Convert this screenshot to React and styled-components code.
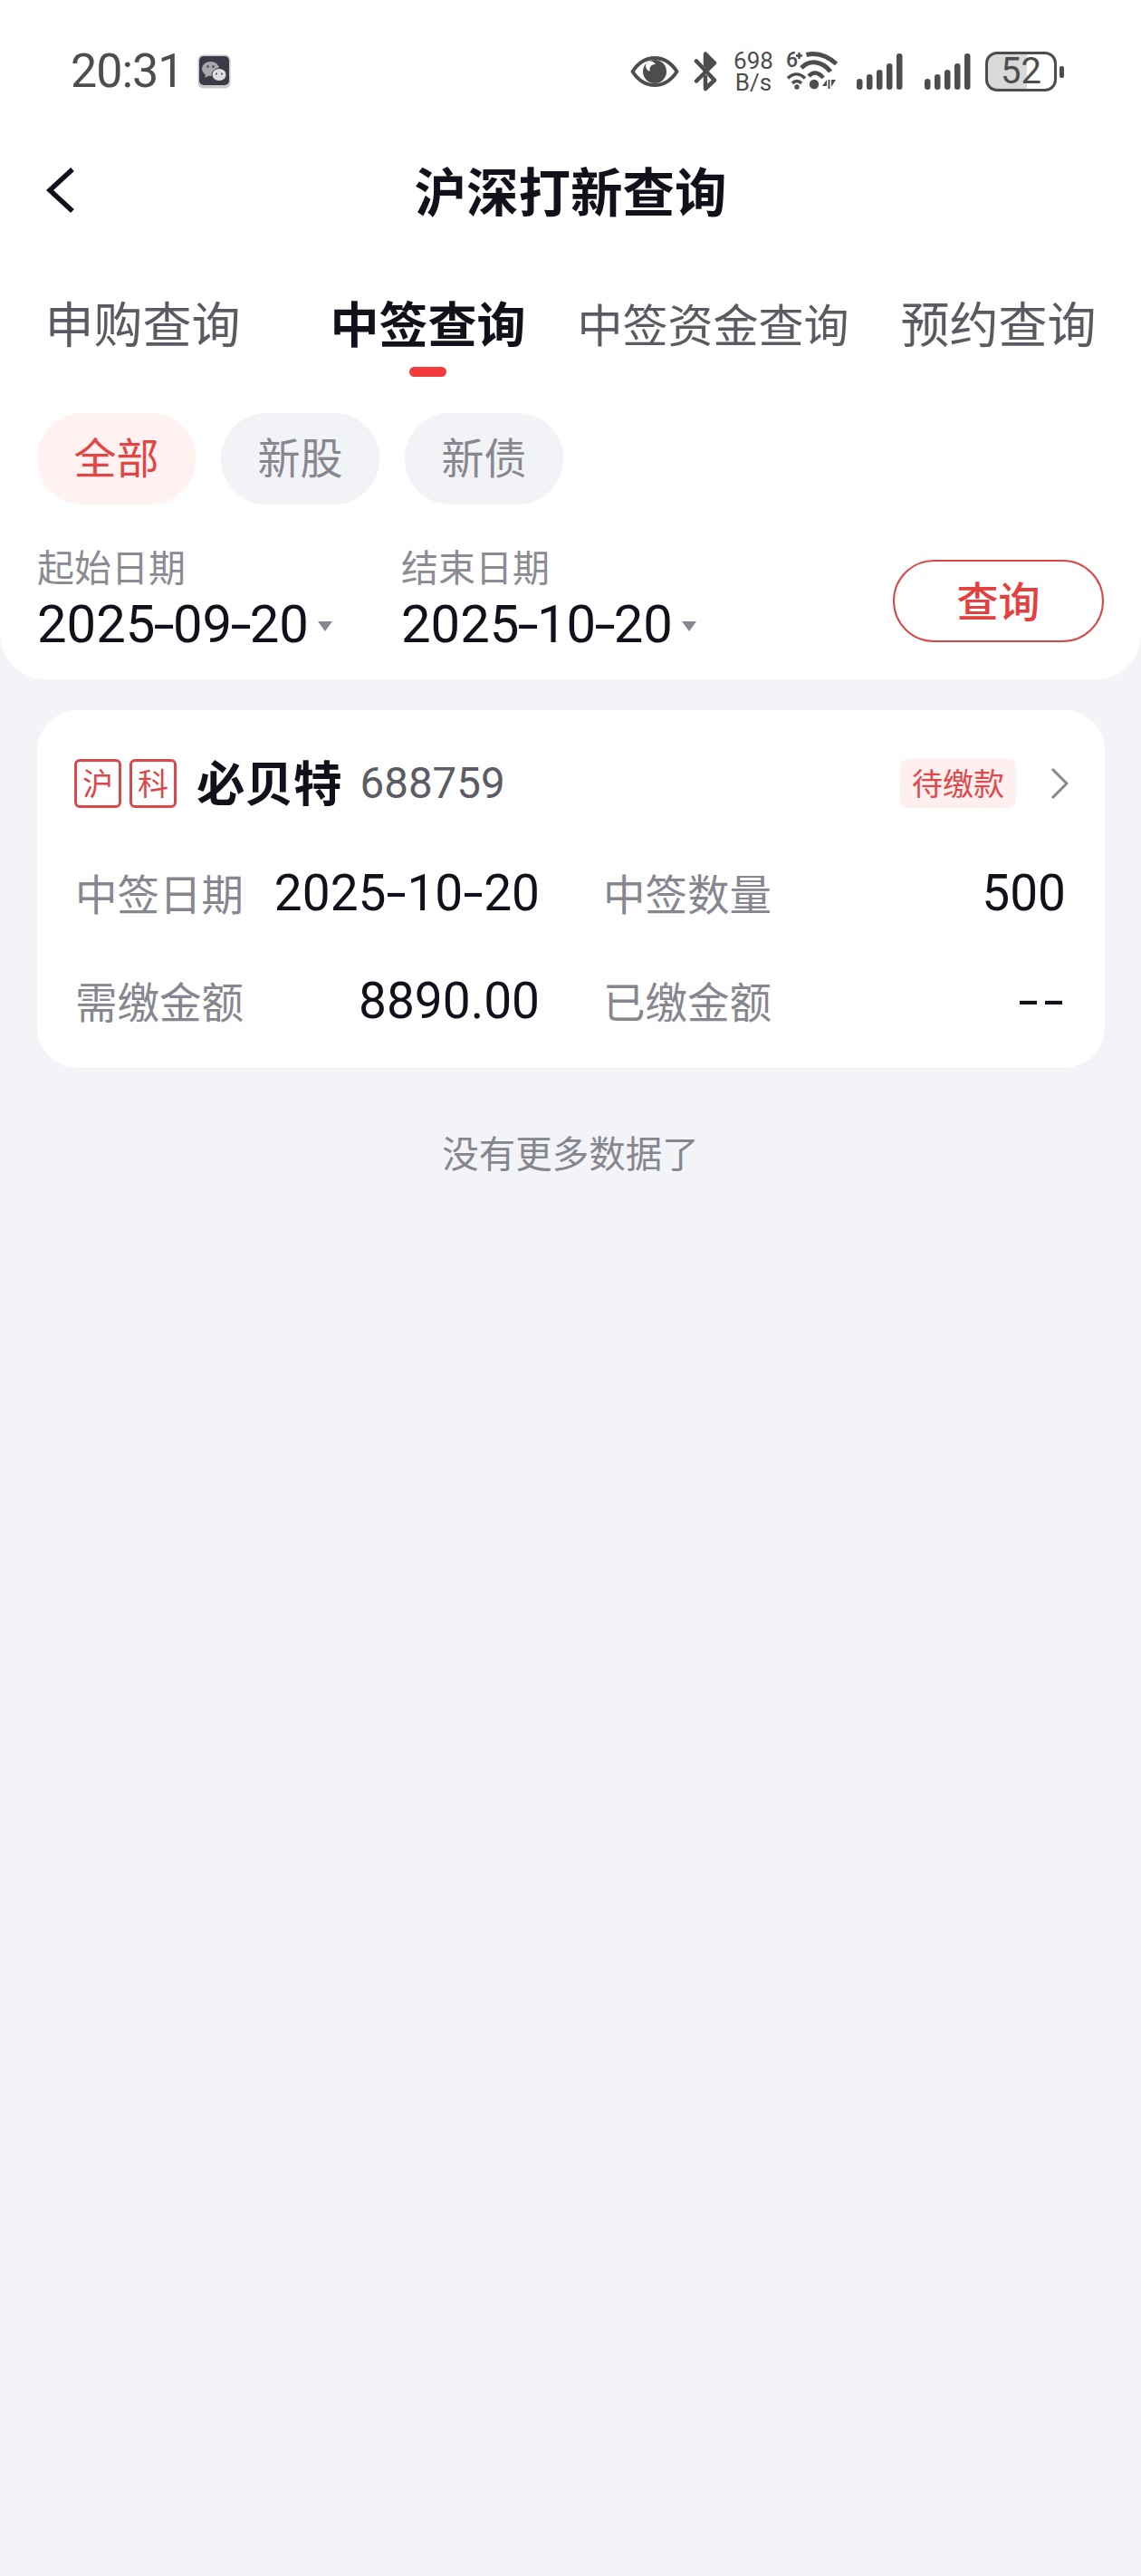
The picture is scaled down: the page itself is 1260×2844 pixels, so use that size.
import React from "react";
import styled, { createGlobalStyle } from "styled-components";

const Global = createGlobalStyle`
  html, body { margin: 0; padding: 0; background: #f3f4f8; }
  body { font-family: Roboto, "Noto Sans CJK SC", sans-serif; }
  * { box-sizing: border-box; }
`;

const Page = styled.div`
  width: 1260px;
  min-height: 2844px;
  background: #f3f4f8;
  overflow: hidden;
`;
const Panel = styled.div`
  background: #fff;
  border-radius: 0 0 50px 50px;
  height: 750px;
`;
const StatusBar = styled.div`
  height: 160px;
  padding: 56px 84px 0 78px;
  display: flex;
  justify-content: space-between;
  align-items: flex-start;
`;
const StatusLeft = styled.div`
  display: flex;
  align-items: center;
  gap: 15px;
  height: 46px;
`;
const Clock = styled.span`
  font: 400 52px/46px Roboto, sans-serif;
  letter-spacing: -1px;
  color: #4d4d4d;
`;
const StatusRight = styled.div`
  display: flex;
  align-items: center;
  height: 46px;
`;
const StatusIcon = styled.svg`
  display: block;
  flex: none;
  margin-left: ${(p) => p.$gap || 0}px;
`;
const Speed = styled.div`
  margin-left: 16px;
  width: 48px;
  font: 400 26px/24.5px Roboto, sans-serif;
  color: #4d4d4d;
  text-align: center;
`;
const Battery = styled.div`
  position: relative;
  margin-left: 16px;
  margin-right: 9px;
  width: 79px;
  height: 44px;
  border: 3.5px solid #4d4d4d;
  border-radius: 13px;
  background: linear-gradient(90deg, #d9d9d9 59%, #fff 59%);
  font: 400 40px/37px Roboto, sans-serif;
  color: #4d4d4d;
  text-align: center;
  &::after {
    content: "";
    position: absolute;
    right: -11px;
    top: 13px;
    width: 5px;
    height: 13px;
    border-radius: 2px;
    background: #4d4d4d;
  }
`;
const Nav = styled.div`
  height: 127px;
  position: relative;
  display: flex;
  justify-content: center;
  padding-top: 9px;
`;
const Back = styled.svg`
  position: absolute;
  left: 48px;
  top: 24px;
`;
const Title = styled.h1`
  margin: 0;
  font: 700 57.5px/80px "Noto Sans CJK SC", sans-serif;
  color: #10111a;
`;
const Tabs = styled.div`
  display: grid;
  grid-template-columns: repeat(4, 1fr);
  padding-top: 37px;
  height: 169px;
  border-top: 1px solid #fbfbfb;
`;
const Tab = styled.div`
  display: flex;
  flex-direction: column;
  align-items: center;
`;
const TabLabel = styled.span`
  font: ${(p) => (p.$active ? 700 : 400)} ${(p) => p.$size || 54}px/62px "Noto Sans CJK SC", sans-serif;
  color: ${(p) => (p.$active ? "#10111a" : "#595a62")};
  white-space: nowrap;
`;
const TabMark = styled.i`
  display: block;
  width: 41px;
  height: 11px;
  margin-top: 18px;
  border-radius: 6px;
  background: #f43b3b;
`;
const Pills = styled.div`
  display: flex;
  gap: 28px;
  padding-left: 41px;
`;
const Pill = styled.div`
  width: 175px;
  height: 101px;
  padding-bottom: 8px;
  border-radius: 50px;
  display: flex;
  align-items: center;
  justify-content: center;
  font: 400 47px/1 "Noto Sans CJK SC", sans-serif;
  background: ${(p) => (p.$active ? "#fff2f1" : "#f2f3f7")};
  color: ${(p) => (p.$active ? "#e34545" : "#86878f")};
`;
const DateRow = styled.div`
  display: flex;
  align-items: flex-start;
  padding: 45px 41px 0 41px;
`;
const DateField = styled.div`
  width: 402px;
`;
const DateLabel = styled.div`
  font: 400 41px/44px "Noto Sans CJK SC", sans-serif;
  color: #8b8c93;
`;
const DateValue = styled.div`
  display: flex;
  align-items: center;
  margin-top: 10px;
  font: 400 58px/66px Roboto, sans-serif;
  color: #10111a;
`;
const Caret = styled.i`
  display: block;
  margin-left: 10px;
  margin-top: 4px;
  border-style: solid;
  border-width: 11px 8px 0 8px;
  border-color: #85868e transparent transparent;
`;
const Dash = styled.span`
  display: inline-block;
  transform: scaleX(1.45);
  margin: 0 ${(p) => p.$pad}em;
`;
const QueryButton = styled.button`
  margin: 16px 0 0 auto;
  width: 233px;
  height: 91px;
  padding: 0 0 6px;
  border: 2px solid #d64a4a;
  border-radius: 46px;
  background: #fff;
  color: #e34040;
  font: 500 46px/1 "Noto Sans CJK SC", sans-serif;
`;
const Card = styled.section`
  margin: 34px 40px 0 41px;
  height: 395px;
  background: #fff;
  border-radius: 45px;
  padding: 54px 40px 0 41px;
`;
const CardHead = styled.div`
  display: flex;
  align-items: center;
  height: 54px;
`;
const Market = styled.span`
  width: 52px;
  height: 54px;
  margin-right: 9px;
  padding-bottom: 2px;
  border: 3.5px solid #d9484a;
  border-radius: 6px;
  display: flex;
  align-items: center;
  justify-content: center;
  font: 400 34px/1 "Noto Sans CJK SC", sans-serif;
  color: #d9484a;
`;
const StockName = styled.span`
  margin-left: 13px;
  padding-bottom: 7px;
  font: 700 53.5px/54px "Noto Sans CJK SC", sans-serif;
  color: #10111a;
`;
const StockCode = styled.span`
  margin-left: 20px;
  font: 400 47.5px/54px Roboto, sans-serif;
  color: #5b5c64;
`;
const Status = styled.span`
  margin-left: auto;
  width: 128px;
  height: 54px;
  padding-bottom: 3px;
  border-radius: 8px;
  background: #fff0ef;
  display: flex;
  align-items: center;
  justify-content: center;
  font: 400 34px/1 "Noto Sans CJK SC", sans-serif;
  color: #e0494b;
`;
const Chevron = styled.svg`
  display: block;
  margin-left: 38px;
`;
const Grid = styled.div`
  display: grid;
  grid-template-columns: 513px 511px;
  column-gap: 70px;
  row-gap: 59px;
  margin-top: 64px;
  margin-left: 1px;
`;
const Cell = styled.div`
  display: flex;
  align-items: center;
  justify-content: space-between;
  height: 60px;
`;
const CellLabel = styled.span`
  padding-bottom: 3px;
  font: 400 46.5px/60px "Noto Sans CJK SC", sans-serif;
  color: #85868e;
`;
const CellValue = styled.span`
  font: 400 55px/60px Roboto, sans-serif;
  color: #10111a;
  white-space: nowrap;
`;
const NoMore = styled.div`
  margin-top: 67px;
  text-align: center;
  font: 400 40.5px/52px "Noto Sans CJK SC", sans-serif;
  color: #85868e;
`;

const WeChat = () => (
  <svg width="37" height="38" viewBox="0 0 37 38">
    <rect x="0.5" y="0.5" width="36" height="37" rx="6" fill="#c9c9cc" />
    <rect x="2" y="2" width="33" height="32" rx="5" fill="#3b3b47" />
    <ellipse cx="14.500" cy="16" rx="9.500" ry="8" fill="#a9a9ad" />
    <path d="M9 22l-1 4 5-2.500z" fill="#a9a9ad" />
    <ellipse cx="24" cy="22.500" rx="8" ry="7" fill="#dedee0" stroke="#3b3b47" strokeWidth="1" />
    <circle cx="11.500" cy="13.500" r="1.200" fill="#3b3b47" />
    <circle cx="17.500" cy="13.500" r="1.200" fill="#3b3b47" />
    <circle cx="21" cy="21.500" r="1" fill="#3b3b47" />
    <circle cx="27" cy="21.500" r="1" fill="#3b3b47" />
  </svg>
);

const Eye = () => (
  <StatusIcon width="54" height="38" viewBox="0 0 54 38">
    <path d="M2.500 19C9 9 17 4 27 4S45 9 51.500 19C45 29 37 34 27 34S9 29 2.500 19Z" fill="none" stroke="#4d4d4d" strokeWidth="4" strokeLinejoin="round" />
    <circle cx="27" cy="19" r="13" fill="#4d4d4d" />
    <circle cx="22.500" cy="13" r="5.500" fill="#fff" />
    <circle cx="27" cy="16.500" r="5.500" fill="#4d4d4d" />
  </StatusIcon>
);

const Bluetooth = () => (
  <StatusIcon $gap={16} width="26" height="44" viewBox="0 0 26 44">
    <path d="M3 10.500L23 31.500L13 41V28" fill="none" stroke="#4d4d4d" strokeWidth="4.500" strokeLinejoin="round" strokeLinecap="round" />
    <path d="M3 32.500L23 12.500L13 2.500V15" fill="none" stroke="#4d4d4d" strokeWidth="4.500" strokeLinejoin="round" strokeLinecap="round" />
    <path d="M13 4L21 12.500 13 20Z" fill="#4d4d4d" />
  </StatusIcon>
);

const Wifi = () => (
  <StatusIcon $gap={12} width="58" height="56" viewBox="0 -6 58 56">
    <text x="0" y="17" fontFamily="Roboto, sans-serif" fontSize="23" fontWeight="500" fill="#4d4d4d">6</text>
    <path d="M11 4.500H18M14.500 1V8" fill="none" stroke="#4d4d4d" strokeWidth="2.500" />
    <path d="M22.500 3.500C34 0.500 46 5 55.500 13.500" fill="none" stroke="#4d4d4d" strokeWidth="5" />
    <path d="M17 18C26 8.500 40 10 49 22" fill="none" stroke="#4d4d4d" strokeWidth="5" />
    <path d="M25 27C30 21.500 36 22.500 41 29" fill="none" stroke="#4d4d4d" strokeWidth="4.500" />
    <path d="M2 29.500C8 23.500 15 23.500 21 29.500M7 35C10 31.500 14 31.500 17 35" fill="none" stroke="#4d4d4d" strokeWidth="3.500" />
    <circle cx="12" cy="39" r="2.700" fill="#4d4d4d" />
    <circle cx="31" cy="36" r="5.200" fill="#4d4d4d" />
    <path d="M45 31L40 38H45ZM46.500 31H48.500V41H46.500ZM50 31V39L55 31Z" fill="#4d4d4d" />
  </StatusIcon>
);

const Signal = ({ gap }) => (
  <StatusIcon $gap={gap} width="51" height="42" viewBox="0 0 51 42">
    <rect x="0" y="29" width="6.500" height="12" rx="3.200" fill="#4d4d4d" />
    <rect x="11" y="24" width="6.500" height="17" rx="3.200" fill="#4d4d4d" />
    <rect x="22" y="19" width="6.500" height="22" rx="3.200" fill="#4d4d4d" />
    <rect x="33" y="12" width="6.500" height="29" rx="3.200" fill="#4d4d4d" />
    <rect x="44" y="1" width="6.500" height="40" rx="3.200" fill="#4d4d4d" />
  </StatusIcon>
);

const withDash = (text, pad) =>
  text.split("").map((c, i) => (c === "-" ? <Dash key={i} $pad={pad}>-</Dash> : c));

const cells = [
  ["中签日期", "2025-10-20", 0.07],
  ["中签数量", "500", 0],
  ["需缴金额", "8890.00", 0],
  ["已缴金额", "--", 0.11],
];

export default function App() {
  return (
    <Page>
      <Global />
      <Panel>
        <StatusBar>
          <StatusLeft>
            <Clock>20:31</Clock>
            <WeChat />
          </StatusLeft>
          <StatusRight>
            <Eye />
            <Bluetooth />
            <Speed>698<br />B/s</Speed>
            <Wifi />
            <Signal gap={20} />
            <Signal gap={24} />
            <Battery>52</Battery>
          </StatusRight>
        </StatusBar>
        <Nav>
          <Back width="38" height="52" viewBox="0 0 38 52">
            <path d="M32 3L7 26l25 23" fill="none" stroke="#10111a" strokeWidth="5.500" />
          </Back>
          <Title>沪深打新查询</Title>
        </Nav>
        <Tabs>
          <Tab><TabLabel>申购查询</TabLabel></Tab>
          <Tab><TabLabel $active>中签查询</TabLabel><TabMark /></Tab>
          <Tab><TabLabel $size={50}>中签资金查询</TabLabel></Tab>
          <Tab><TabLabel>预约查询</TabLabel></Tab>
        </Tabs>
        <Pills>
          <Pill $active>全部</Pill>
          <Pill>新股</Pill>
          <Pill>新债</Pill>
        </Pills>
        <DateRow>
          <DateField>
            <DateLabel>起始日期</DateLabel>
            <DateValue><span>{withDash("2025-09-20", 0.03)}</span><Caret /></DateValue>
          </DateField>
          <DateField>
            <DateLabel>结束日期</DateLabel>
            <DateValue><span>{withDash("2025-10-20", 0.03)}</span><Caret /></DateValue>
          </DateField>
          <QueryButton>查询</QueryButton>
        </DateRow>
      </Panel>
      <Card>
        <CardHead>
          <Market>沪</Market>
          <Market>科</Market>
          <StockName>必贝特</StockName>
          <StockCode>688759</StockCode>
          <Status>待缴款</Status>
          <Chevron width="20" height="36" viewBox="0 0 20 36">
            <path d="M2 2l16 16L2 34" fill="none" stroke="#85868e" strokeWidth="3" />
          </Chevron>
        </CardHead>
        <Grid>
          {cells.map(([label, value, pad]) => (
            <Cell key={label}>
              <CellLabel>{label}</CellLabel>
              <CellValue>{withDash(value, pad)}</CellValue>
            </Cell>
          ))}
        </Grid>
      </Card>
      <NoMore>没有更多数据了</NoMore>
    </Page>
  );
}
